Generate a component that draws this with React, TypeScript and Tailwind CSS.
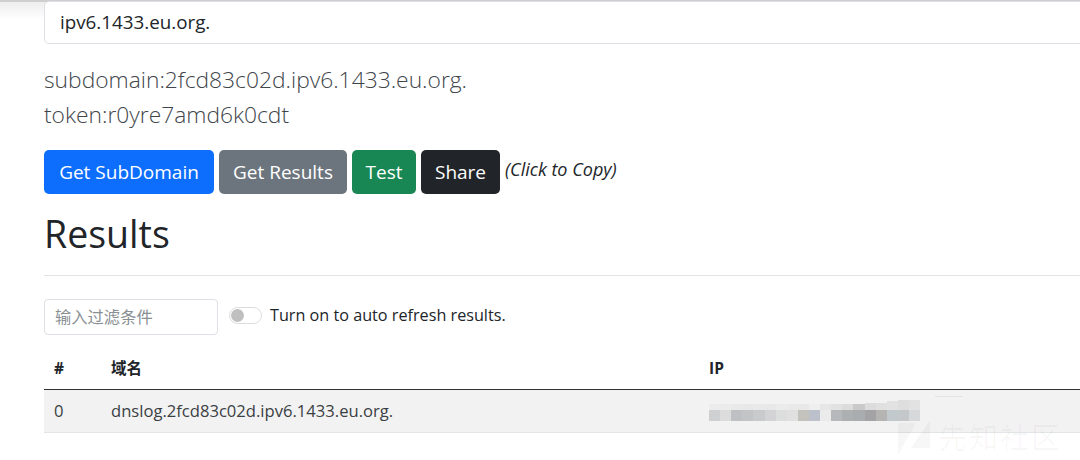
const topCells: [string, number][] = [["#ececec",6],["#ebebeb",6],["#e9e9e9",6],["#e8e8e8",6],["#e9e9e9",6],["#e8e8e8",6],["#ebebeb",6],["#e9e9e9",6],["#e8e8e8",6],["#eeeeee",6],["#e6e6e6",6],["#e2e2e2",6],["#dcdcdc",6],["#c9c9c9",6],["#dcdcdc",7],["#e0e0e0",7],["#e2e2e2",9],["#dedede",10],["#e2e2e2",10]];
const bottomCells = ["#cfd0d2","#dcdcdc","#bfc0c4","#c3c4c6","#c9cacb","#d3d3d5","#dcdddd","#e0e0e0","#c3c2bd","#bcc0ca","#ebebeb","#b6b8bb","#adb0b0","#a9adb0","#a3a3a5","#b6b3b3","#c2c9cc","#c4c8cb","#d6d8da"];

function Blur() {
  return (
    <div className="flex flex-col w-[211px] -mt-[1px]">
      <div className="flex h-[10px] items-end">
        {topCells.map(([c, h], i) => (
          <div key={i} className="flex-1" style={{ background: c, height: h }} />
        ))}
      </div>
      <div className="flex h-[11px]">
        {bottomCells.map((c, i) => (
          <div key={i} className="flex-1" style={{ background: c }} />
        ))}
      </div>
    </div>
  );
}

export default function App() {
  return (
    <div className="relative w-[1080px] h-[460px] overflow-hidden bg-white font-['Open_Sans','Noto_Sans_CJK_SC',sans-serif] text-[#212529]">
      <div className="absolute inset-x-0 top-0 h-[20px] bg-gradient-to-b from-[#ececec] to-white" />
      <div className="absolute inset-x-0 top-0 h-[2px] bg-[#cfcfcf]" />
      <div className="relative w-[1110px] pl-[44px] pt-[1px]">
        <div className="h-[43px] flex items-center rounded-[5px] border border-[#dfdfe6] bg-white pl-[15px] text-[18.8px] text-[#212529]">
          ipv6.1433.eu.org.
        </div>
        <div className="mt-[18px] text-[22.8px] leading-[35px] font-light text-[#41464b]">
          <p>subdomain:2fcd83c02d.ipv6.1433.eu.org.</p>
          <p>token:r0yre7amd6k0cdt</p>
        </div>
        <div className="mt-[18px] flex items-center gap-[5px]">
          <button className="h-[44px] w-[170px] rounded-[5px] bg-[#0d6efd] text-[19px] text-white">Get SubDomain</button>
          <button className="h-[44px] w-[128px] rounded-[5px] bg-[#6c757d] text-[19px] text-white">Get Results</button>
          <button className="h-[44px] w-[64px] rounded-[5px] bg-[#198754] text-[19px] text-white">Test</button>
          <button className="h-[44px] w-[79px] rounded-[5px] bg-[#212529] text-[19px] text-white">Share</button>
          <em className="text-[18px] -mt-[6px]">(Click to Copy)</em>
        </div>
        <h2 className="mt-[12px] text-[37.5px] leading-[56px] font-normal text-[#212529]">Results</h2>
        <div className="mt-[13px] h-px bg-[#e4e4e4]" />
        <div className="mt-[23px] flex items-center gap-[11px]">
          <div className="w-[174px] h-[36px] flex items-center rounded-[4px] border border-[#dfdfe6] pl-[10px] pt-[1px] text-[16.3px] text-[#8a8f94]">
            输入过滤条件
          </div>
          <div className="-mt-[3px] flex items-center gap-[8px]">
            <div className="w-[33px] h-[17px] rounded-full border border-[#dcdcdc] p-[1px] flex items-center">
              <div className="w-[13px] h-[13px] rounded-full bg-[#bfbfbf]" />
            </div>
            <span className="text-[16.2px]">Turn on to auto refresh results.</span>
          </div>
        </div>
        <div className="mt-[13px] flex h-[42px] items-center border-b border-[#303236] font-bold text-[15.5px]">
          <span className="w-[67px] pl-[10px]">#</span>
          <span className="w-[598px]">域名</span>
          <span>IP</span>
        </div>
        <div className="flex h-[43px] items-center border-b border-[#e2e5e8] bg-[#f2f2f2] text-[16.6px] text-[#3a3f44]">
          <span className="w-[67px] pl-[10px] pt-[1px]">0</span>
          <span className="w-[598px] pt-[1px]">dnslog.2fcd83c02d.ipv6.1433.eu.org.</span>
          <Blur />
        </div>
      </div>
      <div className="absolute left-[935px] top-[396px] w-[28px] h-px bg-[#e4e4e4]" />
      <div className="absolute left-[898px] top-[420px] flex items-center gap-[8px] text-black/[0.03]">
        <svg width="32" height="35" viewBox="0 0 32 35" fill="currentColor">
          <path d="M0 3 H18 L0 35 Z" />
          <path d="M32 0 V28 H13 Z" />
        </svg>
        <span className="text-[29px] leading-[35px] tracking-[2px]">先知社区</span>
      </div>
    </div>
  );
}
